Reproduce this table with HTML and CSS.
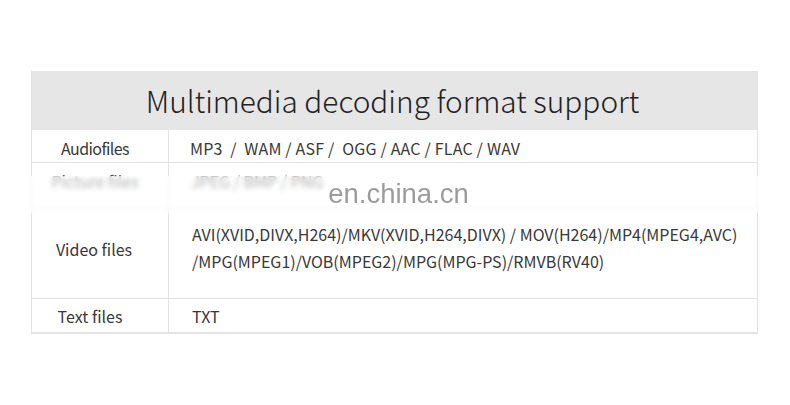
FILE: index.html
```html
<!DOCTYPE html>
<html lang="en">
<head>
<meta charset="utf-8">
<title>Multimedia decoding format support</title>
<link rel="stylesheet" href="styles.css">
</head>
<body>
<div class="page">
  <div class="table">
    <div class="title">Multimedia decoding format support</div>
    <div class="row row-audio">
      <div class="label">Audiofiles</div>
      <div class="value">MP3 &nbsp;/ &nbsp;WAM / ASF / &nbsp;OGG / AAC / FLAC / WAV</div>
    </div>
    <div class="row row-pic">
      <div class="label">Picture files</div>
      <div class="value">JPEG / BMP / PNG</div>
    </div>
    <div class="row row-video">
      <div class="label">Video files</div>
      <div class="value">AVI(XVID,DIVX,H264)/MKV(XVID,H264,DIVX) / MOV(H264)/MP4(MPEG4,AVC)<br>/MPG(MPEG1)/VOB(MPEG2)/MPG(MPG-PS)/RMVB(RV40)</div>
    </div>
    <div class="row row-text">
      <div class="label">Text files</div>
      <div class="value">TXT</div>
    </div>
    <div class="watermark"><span>en.china.cn</span></div>
  </div>
</div>
</body>
</html>
```
FILE: styles.css
```css
html, body {
  margin: 0;
  padding: 0;
  background: #ffffff;
}
.page {
  padding: 71px 0 0 31px;
  font-family: "Noto Sans CJK SC", "Noto Sans", sans-serif;
  color: #383838;
}
.table {
  position: relative;
  width: 727px;
  border: 1px solid #e3e3e3;
  border-top: none;
  box-sizing: border-box;
}
.title {
  height: 59px;
  background: #e6e6e6;
  display: flex;
  align-items: center;
  justify-content: center;
  font-size: 29.8px;
  font-weight: 300;
  color: #222222;
  padding-bottom: 2px;
  padding-right: 4px;
  box-sizing: border-box;
}
.row {
  display: grid;
  grid-template-columns: 137px 1fr;
  border-bottom: 1px solid #e3e3e3;
  box-sizing: border-box;
}
.row:last-of-type {
  border-bottom: none;
}
.label {
  border-right: 1px solid #e3e3e3;
  display: flex;
  align-items: center;
  justify-content: center;
  font-size: 16px;
}
.value {
  display: flex;
  align-items: center;
  padding-left: 22px;
  font-size: 16px;
}
.row-audio { height: 33px; }
.row-audio .label {
  padding-top: 4px;
  padding-right: 10px;
  letter-spacing: -0.6px;
}
.row-audio .value {
  padding-top: 4px;
  padding-left: 21px;
  letter-spacing: 0.2px;
}
.row-pic { height: 46px; }
.row-pic .label, .row-pic .value { align-items: flex-start; padding-top: 6px; color: #555; }
.row-pic .label { padding-right: 10px; }
.row-video { height: 90px; }
.row-video .label { padding-bottom: 10px; padding-right: 12px; }
.row-video .value {
  line-height: 27px;
  padding-left: 23px;
  padding-bottom: 12px;
}
.row-text { height: 34px; }
.row-text .label { padding-right: 20px; }
.row-text .value { padding-left: 23px; }
.watermark {
  position: absolute;
  left: -11px;
  right: -3px;
  top: 105px;
  height: 37px;
  background: rgba(255, 255, 255, 0.55);
  backdrop-filter: blur(2.5px);
  display: flex;
  justify-content: center;
}
.watermark span {
  font-family: "Liberation Sans", Arial, sans-serif;
  font-size: 27.5px;
  color: #9c9c9c;
  line-height: 32px;
  margin-left: 16px;
  margin-top: 2px;
}
```
